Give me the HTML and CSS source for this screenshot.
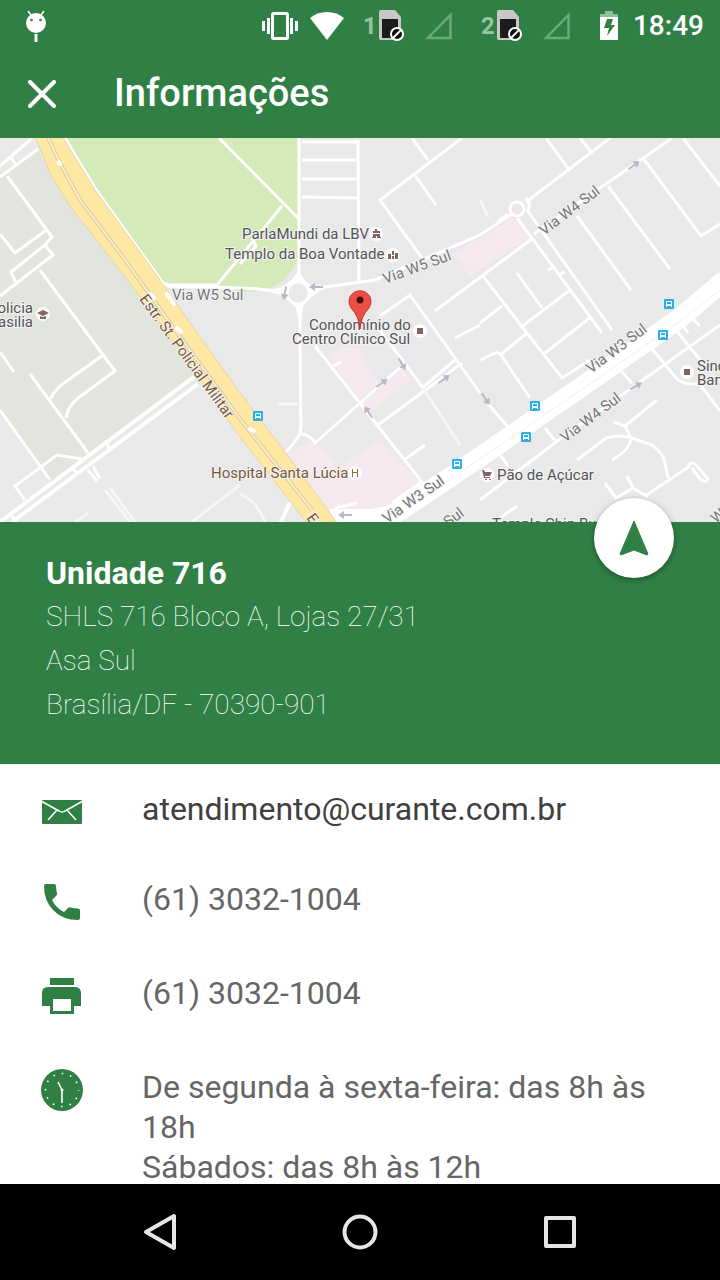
FILE: index.html
```html
<!DOCTYPE html>
<html lang="pt-BR">
<head>
<meta charset="utf-8">
<meta name="viewport" content="width=device-width, initial-scale=1">
<title>Informações</title>
<link rel="stylesheet" href="styles.css">
</head>
<body>

<svg class="defs" width="0" height="0" aria-hidden="true">
  <symbol id="sim" viewBox="0 0 26 32">
    <path fill="#c8c8c8" d="M2 0h14l6 7v21a2 2 0 0 1-2 2H2a2 2 0 0 1-2-2V2a2 2 0 0 1 2-2z"/>
    <path fill="#1c1c1c" d="M3 9h16v19H3z"/>
    <circle cx="18" cy="24" r="6" fill="#111" stroke="#fff" stroke-width="2"/>
    <path stroke="#fff" stroke-width="2" d="M14 28l8-8"/>
  </symbol>
  <symbol id="signal" viewBox="0 0 28 30">
    <path fill="none" stroke="#6aab79" stroke-width="2.500" d="M25.500 4v23H3z"/>
  </symbol>
  <symbol id="bus" viewBox="0 0 10 10">
    <rect width="10" height="10" rx="1" fill="#2aaeea"/>
    <path fill="#fff" d="M2 3a1 1 0 0 1 1-1h4a1 1 0 0 1 1 1v5H7V7H3v1H2z"/>
    <path fill="#2aaeea" d="M3 3h4v2H3z"/>
  </symbol>
  <symbol id="arrow" viewBox="0 0 14 8">
    <path fill="#b9b9c6" d="M0 3h8V0l6 4-6 4V5H0z"/>
  </symbol>
</svg>

<header class="top">
  <div class="status">
    <svg class="droid" viewBox="0 0 20 32" width="20" height="32">
      <path stroke="#fff" stroke-width="1.500" d="M2 1l3 4M18 1l-3 4"/>
      <circle cx="10" cy="13" r="10" fill="#fff"/>
      <circle cx="5.500" cy="10" r="1.300" fill="#308046"/>
      <circle cx="14.500" cy="10" r="1.300" fill="#308046"/>
      <path fill="#fff" d="M8.500 24h3v8h-3z"/>
    </svg>
    <svg class="vibrate" viewBox="0 0 36 28" width="36" height="28">
      <rect x="10.500" y="1.500" width="15" height="25" rx="1" fill="none" stroke="#fff" stroke-width="3"/>
      <path fill="#fff" d="M0 9h3v10H0zM5 6h3v16H5zM28 6h3v16h-3zM33 9h3v10h-3z"/>
    </svg>
    <svg class="wifi" viewBox="0 0 34 28" width="34" height="28">
      <path fill="#fff" d="M0 6Q7 0 17 0t17 6L17 28z"/>
    </svg>
    <span class="slot"><b>1</b><svg width="26" height="32"><use href="#sim"/></svg><svg width="28" height="30"><use href="#signal"/></svg></span>
    <span class="slot"><b>2</b><svg width="26" height="32"><use href="#sim"/></svg><svg width="28" height="30"><use href="#signal"/></svg></span>
    <svg class="battery" viewBox="0 0 20 30" width="20" height="30">
      <path fill="#8fc09c" d="M6 0h8v3h5v4H1V3h5z"/>
      <path fill="#fff" d="M1 6h18v23H1z"/>
      <path fill="#308046" d="M8 8h6l-2 6h4L8 25l2-8H5z"/>
    </svg>
    <time>18:49</time>
  </div>
  <div class="bar">
    <button class="close" type="button" aria-label="Fechar">
      <svg viewBox="0 0 28 28" width="28" height="28"><path stroke="#fff" stroke-width="4" stroke-linecap="round" d="M2 2l24 24M26 2L2 26"/></svg>
    </button>
    <h1>Informações</h1>
  </div>
</header>

<main>
  <svg class="map" viewBox="0 0 720 384" role="img" aria-label="Mapa">
    <rect width="720" height="384" fill="#e9e9e9"/>

    <!-- areas -->
    <path fill="#e2e4de" d="M0 40L38 12 50 35 70 68 140 158 165 192 196 238 50 345 0 272z"/>
    <path fill="#d5eab9" d="M65 0L95 50 165 146H217L240 154Q288 156 300 115V0z"/>
    <path fill="#f6e8ef" d="M453 116L513 80 531 99 470 138zM328 218L345 208 358 211 378 246 358 263zM361 266L402 231 411 241 370 275zM288 316L310 304 322 310 340 330 380 302 425 350 400 374 330 377z"/>

    <!-- streets -->
    <g class="street">
      <path d="M0 28L32 0M0 39L38 11M11 19L15 26M7 38L52 99 45 107 53 117 0 158M45 93L15 115 0 96M45 107L11 134 16 145M40 132L115 233 78 260Q68 268 66 280M103 217L60 248Q54 254 50 261"/>
      <path d="M0 214L14 234M30 236L88 315M0 272L50 342M25 362L15 348 57 317 82 321M105 303L110 311M72 330L78 336M88 332L97 343M93 328L100 341M11 377L16 384"/>
      <path d="M65 0L95 50 160 141Q163 147 170 147H217L282 68M219 0L300 82M167 148L240 150Q270 150 286 157M240 126L256 108 252 100"/>
      <path d="M302 4H358L359 145M302 22H358M302 41H358M302 59L358 60"/>
      <path d="M310 155L325 149 375 142 480 97 512 76M422 120L380 62 462 0M412 0L428 22M414 36L436 67M380 178L410 157 480 255M435 173L533 100"/>
      <path d="M526 64L610 0M546 0L570 33M580 0L592 15M534 96L672 0M577 78L631 152M608 48L670 131M643 20L701 98 720 86M683 0L720 48"/>
      <path d="M517 80L602 195M527 72L612 192M482 137L562 240 590 222M517 135L542 170M520 190L570 152M480 185L502 168M548 132L555 128M545 215L592 178M480 222L495 215Q500 214 503 220L530 260M500 217L527 195M560 136L565 134"/>
      <path d="M300 170V205L301 290Q300 300 285 315M300 296Q310 296 315 305L403 227M315 208L432 357M380 192L423 250M378 287L462 225M422 250L455 222M455 200L480 187M333 228L341 224M392 365L420 345M335 370L357 365M404 322L425 307"/>
      <path d="M480 362L556 304 720 187M488 266L508 289M545 290L556 304M500 317L508 328M620 232L632 245M640 196L676 240Q682 247 700 246L720 273M676 192L705 228M500 380L517 368"/>
      <path d="M577 322L606 300Q620 296 632 300L652 307Q664 316 665 325L668 340M612 322Q630 312 631 300L625 288 614 284M625 288L657 262M690 328L645 358M605 345L616 360 633 350 627 338M633 350L648 359M680 168L700 188M676 178L688 195M688 328Q692 322 697 328L708 341Q706 346 700 341L692 330"/>
      <path class="wide" d="M0 384L195 238M12 384L198 246"/>
    </g>
    <path class="faint" d="M105 352L130 384M110 350L135 384M192 384L240 347M240 356Q256 362 265 384M277 266H298M423 250L460 307M75 384L88 375M480 62L488 78"/>
    <path class="main-road" d="M330 381H360Q390 382 410 366L480 319 600 236 680 180 725 142"/>
    <path class="median" d="M420 362L480 321 600 239 680 183 720 152"/>

    <!-- roundabouts -->
    <path fill="#fff" d="M299 128Q300 140 310 147L330 148Q311 157 303 168L300 192 296 170Q288 158 270 154L240 150 275 151Q295 145 299 128z"/>
    <circle cx="298" cy="155" r="11" class="ring"/>
    <circle cx="517" cy="71" r="7" class="ring"/>
    <path class="street" d="M299 0V135M526 60Q532 66 527 74M498 83L508 76"/>

    <!-- highway -->
    <path fill="#ffe7a4" stroke="#e8d6a0" d="M35 -2L50 35 70 68 140 158 165 192 240 299 308 386H338L285 314 240 255 195 192 150 128 95 52 62 -2z"/>
    <path fill="none" stroke="#d8cba6" stroke-width="4" d="M48 0L60 25 80 62 120 115 165 178 240 281 312 372"/>
    <path fill="none" stroke="#ffeebd" stroke-width="2" d="M48 0L60 25 80 62 120 115 165 178 240 281 312 372"/>
    <path stroke="#fff" stroke-width="4" stroke-linecap="round" d="M59 24l1 2M150 156l4 4M167 156l7 10M250 291l4 2M281 384l8-18M177 190l4 4"/>

    <!-- one way arrows -->
    <use href="#arrow" width="14" height="8" transform="translate(626 28) rotate(-36)"/>
    <use href="#arrow" width="14" height="8" transform="translate(374 246) rotate(-36)"/>
    <use href="#arrow" width="14" height="8" transform="translate(436 242) rotate(-36)"/>
    <use href="#arrow" width="14" height="8" transform="translate(628 248) rotate(-30)"/>
    <use href="#arrow" width="14" height="8" transform="translate(402 218) rotate(60)"/>
    <use href="#arrow" width="14" height="8" transform="translate(485 253) rotate(55)"/>
    <use href="#arrow" width="14" height="8" transform="translate(369 282) rotate(-125)"/>
    <use href="#arrow" width="14" height="8" transform="translate(352 381) rotate(180)"/>
    <use href="#arrow" width="14" height="8" transform="translate(323 153) rotate(180)"/>
    <use href="#arrow" width="14" height="8" transform="translate(290 149) rotate(100)"/>

    <!-- bus stops -->
    <use href="#bus" x="253" y="273" width="10" height="10"/>
    <use href="#bus" x="452" y="321" width="10" height="10"/>
    <use href="#bus" x="521" y="294" width="10" height="10"/>
    <use href="#bus" x="530" y="263" width="10" height="10"/>
    <use href="#bus" x="658" y="192" width="10" height="10"/>
    <use href="#bus" x="664" y="161" width="10" height="10"/>

    <!-- places -->
    <g fill="#fff">
      <circle cx="376" cy="96" r="7"/><circle cx="393" cy="117" r="7"/><circle cx="43" cy="176" r="7"/>
      <circle cx="420" cy="193" r="7"/><circle cx="355" cy="335" r="7"/><circle cx="487" cy="337" r="7"/><circle cx="687" cy="234" r="7"/>
    </g>
    <g fill="#83655d">
      <path d="M375 91h2v2h3v2h-7v-2h2zM373 96h7v3h1v1h-4v-2h-1v2h-4v-1h1z"/>
      <path d="M388 116h3v5h-3zM392 113h2v4h-2zM392 118h2v3h-2zM395 115h3v6h-3z"/>
      <path d="M37 175l6-3 6 3-6 3zM40 178l3 1 3-1v3h-6z"/>
      <path d="M417 190h6v6h-6zM684 231h6v6h-6z"/>
      <path d="M482 332h2l1 2h7l-2 4h-5v1h5v1h-6zM485 341h2v1h-2zM489 341h2v1h-2z"/>
      <path d="M352 331h1v3h4v-3h1v8h-1v-4h-4v4h-1z" fill="#8b6f47"/>
    </g>

    <g class="label">
      <text x="242" y="101">ParlaMundi da LBV</text>
      <text x="225" y="121">Templo da Boa Vontade</text>
      <text x="309" y="192">Condomínio do</text>
      <text x="292" y="206">Centro Clínico Sul</text>
      <text x="33" y="175" text-anchor="end">Policia</text>
      <text x="33" y="189" text-anchor="end">Brasilia</text>
      <text x="697" y="233">Sindicato</text>
      <text x="697" y="247">Bancários</text>
      <text x="497" y="342">Pão de Açúcar</text>
      <text x="492" y="391">Temple Chip Burger</text>
      <text x="211" y="340" class="brown">Hospital Santa Lúcia</text>
    </g>
    <g class="label road">
      <text x="172" y="162">Via W5 Sul</text>
      <text transform="translate(385 146) rotate(-20)">Via W5 Sul</text>
      <text transform="translate(544 98) rotate(-37)">Via W4 Sul</text>
      <text transform="translate(591 236) rotate(-37)">Via W3 Sul</text>
      <text transform="translate(565 305) rotate(-37)">Via W4 Sul</text>
      <text transform="translate(387 386) rotate(-35)">Via W3 Sul</text>
      <text transform="translate(408 420) rotate(-37)">Via W4 Sul</text>
      <text transform="translate(716 386) rotate(-40)">W5</text>
      <text transform="translate(139 161) rotate(54)" class="brown">Estr. St. Policial Militar</text>
      <text transform="translate(306 380) rotate(54)" class="brown">Estr.</text>
    </g>

    <path fill="#ea4e46" stroke="#b8352f" d="M360 191Q359 178 351 170A11 11 0 1 1 369 170Q361 178 360 191z"/>
    <circle cx="360" cy="162" r="3.500" fill="#4b0d0b"/>
  </svg>

  <section class="unit">
    <button class="fab" type="button" aria-label="Navegar">
      <svg viewBox="0 0 30 36" width="30" height="36"><path fill="#308046" stroke="#308046" stroke-linejoin="round" d="M15 1L29 34 28 35 15 30 2 35 1 34z"/></svg>
    </button>
    <h2>Unidade 716</h2>
    <address>
      SHLS 716 Bloco A, Lojas 27/31<br>
      Asa Sul<br>
      Brasília/DF - 70390-901
    </address>
  </section>

  <ul class="contacts">
    <li class="email">
      <svg viewBox="0 0 42 42"><rect x="1" y="9" width="40" height="24" rx="1" fill="#308046"/><path fill="none" stroke="#fff" stroke-width="1.500" d="M1 10.500L18 20Q21 22 24 20L41 10.500M16 19L7 29M26 19L35 29"/></svg>
      <a href="mailto:atendimento@curante.com.br">atendimento@curante.com.br</a>
    </li>
    <li>
      <svg viewBox="0 0 42 42"><path fill="#308046" d="M5 3h8q2 0 2 2 0 4 1 7 .5 1.500-.5 2.500L11 19q4 8 12 12l4-4q1-1 2.500-.5 3.500 1 7.500 1 2 0 2 2V37q0 2-2 2Q22 39 12.500 29.500T3 5q0-2 2-2z"/></svg>
      <a href="tel:+556130321004">(61) 3032-1004</a>
    </li>
    <li>
      <svg viewBox="0 0 42 42"><path fill="#308046" d="M9 3h24v7H9zM7 12h27q6 0 6 6v13h-7v8H9v-8H1V18q0-6 6-6z"/><path fill="#fff" d="M12 24h18v12H12z"/></svg>
      <span>(61) 3032-1004</span>
    </li>
    <li>
      <svg viewBox="0 0 42 42"><circle cx="21" cy="21" r="21" fill="#308046"/><circle cx="21" cy="21" r="16.500" fill="none" stroke="#fff" stroke-width="1.600" stroke-dasharray="1.600 7.040" stroke-dashoffset=".8"/><circle cx="21" cy="21" r="1.500" fill="#fff"/><path stroke="#fff" stroke-width="1.600" d="M21 21v13M21 21l-4-8"/></svg>
      <p>De segunda à sexta-feira: das 8h às 18h<br>Sábados: das 8h às 12h</p>
    </li>
  </ul>
</main>

<nav class="keys">
  <button type="button" aria-label="Voltar"><svg viewBox="0 0 40 40"><path d="M34 4v32L6 20z"/></svg></button>
  <button type="button" aria-label="Início"><svg viewBox="0 0 40 40"><circle cx="20" cy="20" r="15.500"/></svg></button>
  <button type="button" aria-label="Recentes"><svg viewBox="0 0 40 40"><rect x="6" y="6" width="28" height="28"/></svg></button>
</nav>

</body>
</html>
```

FILE: styles.css
```css
* {
  box-sizing: border-box;
}

body {
  margin: 0;
  height: 100vh;
  display: flex;
  flex-direction: column;
  overflow: hidden;
  background: #fff;
  font-family: Roboto, sans-serif;
  color: #666;
}

h1, h2, p, ul {
  margin: 0;
  padding: 0;
}

button {
  display: flex;
  align-items: center;
  justify-content: center;
  padding: 0;
  border: 0;
  background: none;
}

a {
  color: inherit;
  text-decoration: none;
}

.defs { position: absolute; }

/* status + title */
.top {
  flex: none;
  background: #308046;
  color: #fff;
}

.status {
  display: flex;
  align-items: center;
  height: 50px;
  padding: 1px 16px 0 26px;
}

.droid { margin-right: auto; }
.wifi { margin: 0 19px 0 12px; }
.battery { margin-right: 14px; }

.slot {
  display: flex;
  align-items: center;
  margin-right: 28px;
}

.slot b {
  width: 16px;
  font-size: 24px;
  line-height: 28px;
  color: #97c4a2;
}

.slot svg + svg { margin-left: 20px; }

.status time {
  font-size: 28px;
  font-weight: 500;
}

.bar {
  display: flex;
  align-items: center;
  height: 88px;
}

.close {
  width: 84px;
  height: 84px;
}

.bar h1 {
  margin-left: 30px;
  padding-bottom: 2px;
  font-size: 38px;
  font-weight: 500;
}

main {
  flex: 1;
  min-height: 0;
  overflow: hidden;
}

/* map */
.map {
  display: block;
  width: 100%;
  height: auto;
}

.street, .faint, .main-road, .median, .ring {
  fill: none;
  stroke: #fff;
  stroke-width: 3px;
}

.wide { stroke-width: 4px; }
.faint { stroke: #f6f6f6; }
.main-road { stroke-width: 20px; }
.median { stroke: #f0f0f0; stroke-width: 1px; }
.ring { fill: #e9e9e9; }

.label {
  font-size: 15px;
  fill: #555;
  stroke: #f3f3f3;
  stroke-width: 2px;
  stroke-linejoin: round;
  paint-order: stroke;
}

.road { fill: #777; }
.label .brown { fill: #7a5a3c; }

/* address */
.unit {
  position: relative;
  padding: 29px 46px 37px;
  background: #308046;
  color: #fff;
  line-height: 44px;
}

.unit h2 {
  font-size: 32px;
  font-weight: 700;
}

.unit address {
  font-size: 28px;
  font-style: normal;
  font-weight: 100;
}

.fab {
  position: absolute;
  top: -24px;
  right: 46px;
  width: 80px;
  height: 80px;
  border-radius: 50%;
  background: #fff;
  box-shadow: 0 2px 6px rgba(0, 0, 0, .35);
}

/* contacts */
.contacts {
  padding: 25px 41px 0;
  list-style: none;
  font-size: 32px;
  line-height: 40px;
}

.contacts li {
  display: flex;
  align-items: flex-start;
  gap: 59px;
  margin-bottom: 54px;
}

.contacts svg {
  flex: none;
  width: 42px;
  height: 42px;
  margin: 2px 0 -4px;
}

.contacts .email {
  margin-bottom: 50px;
  color: #404040;
}

/* android keys */
.keys {
  flex: none;
  display: flex;
  justify-content: center;
  gap: 104px;
  height: 96px;
  background: #000;
}

.keys button { width: 96px; }

.keys svg {
  width: 40px;
  height: 40px;
  fill: none;
  stroke: #e6e6e6;
  stroke-width: 4px;
  stroke-linejoin: round;
}
```
